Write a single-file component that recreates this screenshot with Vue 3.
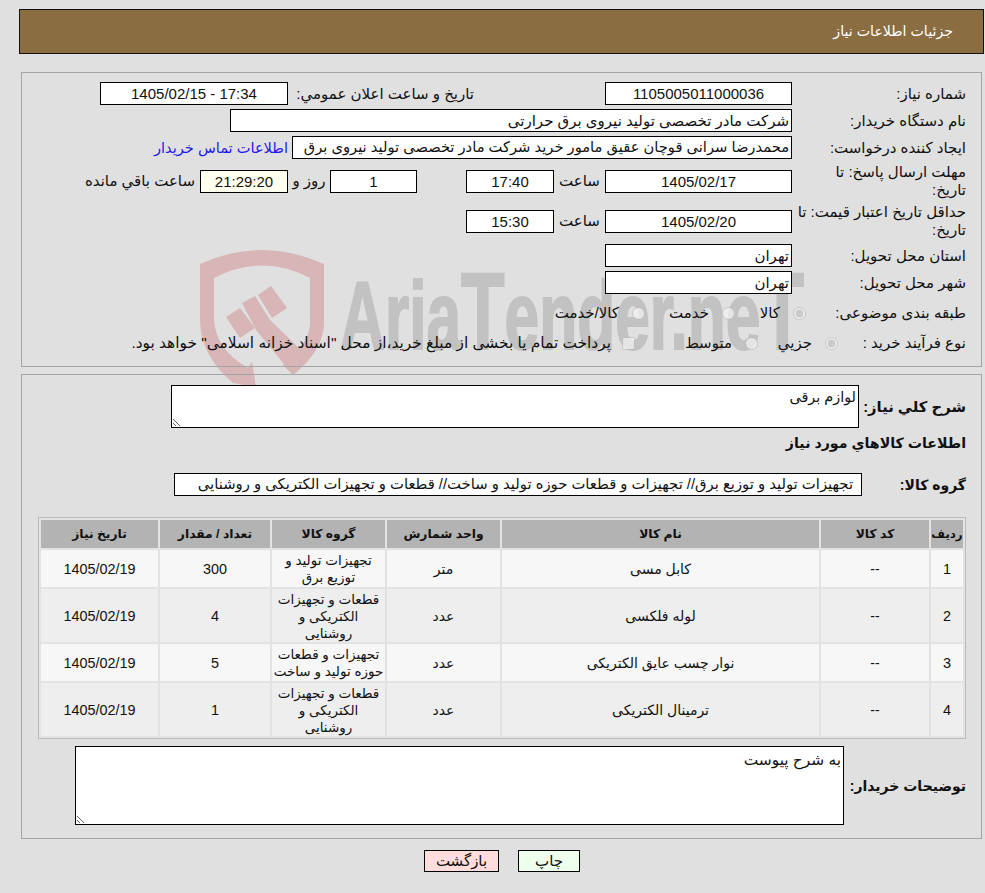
<script setup>
const rows = [
  { id: 1, name: 'کابل مسی', group: 'تجهیزات تولید و\nتوزیع برق', amount: '300', unit: 'متر', tall: false },
  { id: 2, name: 'لوله فلکسی', group: 'قطعات و تجهیزات\nالکتریکی و\nروشنایی', amount: '4', unit: 'عدد', tall: true },
  { id: 3, name: 'نوار چسب عایق الکتریکی', group: 'تجهیزات و قطعات\nحوزه تولید و ساخت', amount: '5', unit: 'عدد', tall: false },
  { id: 4, name: 'ترمینال الکتریکی', group: 'قطعات و تجهیزات\nالکتریکی و\nروشنایی', amount: '1', unit: 'عدد', tall: true }
]
</script>

<template>
  <div class="page" dir="rtl">
    <div class="title-bar">جزئیات اطلاعات نیاز</div>

    <div class="content">
      <svg class="watermark" width="660" height="200" viewBox="0 0 660 200">
        <path d="M10 24 Q72 -4 134 24 L134 85 Q132 112 103 135 L93 125 Q118 105 120 85 L120 38 Q72 13 24 38 L24 80 Q26 110 58 128 L62 122 L66 147 L43 143 Q10 115 10 80 Z" fill="#d8b5b6" />
        <path d="M36 77 L50 68 L65 88 L50 98 Z" fill="#d8b5b6" />
        <path d="M52 63 L65 56 L80 80 L116 115 L103 135 L66 90 Z" fill="#d8b5b6" />
        <path d="M68 55 L81 46 L97 68 L82 78 Z" fill="#d8b5b6" />
        <text class="wm-text" x="150" y="109" textLength="464" lengthAdjust="spacingAndGlyphs">Aria<tspan class="wm-cap">T</tspan>ender.ne<tspan class="wm-cap">T</tspan></text>
      </svg>

      <section class="panel panel-top">
        <div class="row">
          <label class="label">شماره نیاز:</label>
          <div class="field w-187 center">1105005011000036</div>
          <span class="label-inline announce">تاریخ و ساعت اعلان عمومي:</span>
          <div class="field w-188 center" dir="ltr">1405/02/15 - 17:34</div>
        </div>
        <div class="row">
          <label class="label">نام دستگاه خریدار:</label>
          <div class="field w-562">شرکت مادر تخصصی تولید نیروی برق حرارتی</div>
        </div>
        <div class="row">
          <label class="label">ایجاد کننده درخواست:</label>
          <div class="field w-500 requester">محمدرضا سرانی قوچان عقیق مامور خرید شرکت مادر تخصصی تولید نیروی برق</div>
          <a class="link">اطلاعات تماس خریدار</a>
        </div>
        <div class="row row-two-line">
          <label class="label">مهلت ارسال پاسخ: تا<br>تاریخ:</label>
          <div class="field w-187 center">1405/02/17</div>
          <span class="label-inline hour">ساعت</span>
          <div class="field w-88 center">17:40</div>
          <div class="field w-87 center days">1</div>
          <span class="label-inline day">روز و</span>
          <div class="field w-88 center timer">21:29:20</div>
          <span class="label-inline remain">ساعت باقي مانده</span>
        </div>
        <div class="row row-two-line second">
          <label class="label">حداقل تاریخ اعتبار قیمت: تا<br>تاریخ:</label>
          <div class="field w-187 center">1405/02/20</div>
          <span class="label-inline hour">ساعت</span>
          <div class="field w-88 center">15:30</div>
        </div>
        <div class="row">
          <label class="label">استان محل تحویل:</label>
          <div class="field w-187">تهران</div>
        </div>
        <div class="row">
          <label class="label">شهر محل تحویل:</label>
          <div class="field w-187">تهران</div>
        </div>
        <div class="row options subject">
          <label class="label">طبقه بندی موضوعی:</label>
          <input class="radio" type="radio" disabled checked>
          <span class="opt w-kala">کالا</span>
          <input class="radio" type="radio" disabled>
          <span class="opt w-service">خدمت</span>
          <input class="radio" type="radio" disabled>
          <span class="opt">کالا/خدمت</span>
        </div>
        <div class="row options process">
          <label class="label">نوع فرآیند خرید :</label>
          <input class="radio" type="radio" disabled checked>
          <span class="opt w-small">جزيي</span>
          <input class="radio" type="radio" disabled>
          <span class="opt w-mid">متوسط</span>
          <input class="radio check" type="checkbox" disabled>
          <span class="opt opt-long">پرداخت تمام یا بخشی از مبلغ خرید،از محل "اسناد خزانه اسلامی" خواهد بود.</span>
        </div>
      </section>

      <section class="panel panel-bottom">
        <div class="desc-row">
          <label class="bold-label desc-label">شرح کلي نیاز:</label>
          <textarea class="area area-short" readonly>لوازم برقی</textarea>
        </div>
        <div class="section-title">اطلاعات کالاهاي مورد نیاز</div>
        <div class="group-row">
          <label class="bold-label group-label">گروه کالا:</label>
          <div class="field w-688 group-field">تجهیزات تولید و توزیع برق// تجهیزات و قطعات حوزه تولید و ساخت// قطعات و تجهیزات الکتریکی و روشنایی</div>
        </div>

        <table class="goods">
          <thead>
            <tr>
              <th class="c-id">ردیف</th>
              <th class="c-code">کد کالا</th>
              <th class="c-name">نام کالا</th>
              <th class="c-unit">واحد شمارش</th>
              <th class="c-group">گروه کالا</th>
              <th class="c-amount">تعداد / مقدار</th>
              <th class="c-date">تاریخ نیاز</th>
            </tr>
          </thead>
          <tbody>
            <tr v-for="item in rows" :key="item.id" :class="{ tall: item.tall, odd: item.id % 2 === 0 }">
              <td class="num">{{ item.id }}</td>
              <td>--</td>
              <td>{{ item.name }}</td>
              <td>{{ item.unit }}</td>
              <td class="td-group">{{ item.group }}</td>
              <td class="num">{{ item.amount }}</td>
              <td class="num">1405/02/19</td>
            </tr>
          </tbody>
        </table>

        <div class="notes-row">
          <label class="bold-label notes-label">توضیحات خریدار:</label>
          <textarea class="area area-tall" readonly>به شرح پیوست</textarea>
        </div>
      </section>
    </div>

    <div class="actions">
      <button class="btn btn-print">چاپ</button>
      <button class="btn btn-back">بازگشت</button>
    </div>
  </div>
</template>

<style>
html,
body {
  margin: 0;
  background: #e0e0e0;
}
</style>

<style scoped>
.page {
  width: 985px;
  height: 893px;
  box-sizing: border-box;
  padding-top: 9px;
  overflow: hidden;
  color: #111;
  font-family: "Liberation Sans", "DejaVu Sans", sans-serif;
  font-size: 15px;
}

.title-bar {
  height: 43px;
  line-height: 43px;
  margin: 0 1px 0 19px;
  padding-right: 30px;
  background: #8b6d42;
  border: 1px solid #111;
  color: #fff;
  font-size: 14.2px;
}

.content {
  position: relative;
  margin-top: 18px;
}

.watermark {
  position: absolute;
  top: 168px;
  left: 190px;
  direction: ltr;
}

.wm-text {
  font-family: "Liberation Sans", sans-serif;
  font-size: 96px;
  font-weight: 700;
  fill: #c2c2c2;
  stroke: #c2c2c2;
  stroke-width: 2px;
}

.wm-cap {
  font-size: 110px;
}

.panel {
  position: relative;
  margin: 0 3px 0 21px;
  border: 1px solid #a5a5a5;
  box-sizing: border-box;
}

.panel-top {
  height: 295px;
  padding: 9px 15px 0 0;
}

.panel-bottom {
  height: 465px;
  margin-top: 7px;
  padding: 10px 15px 0 16px;
}

.row {
  display: flex;
  align-items: center;
  height: 23px;
  margin-bottom: 4px;
}

.row-two-line {
  height: 36px;
}

.row-two-line.second {
  margin-bottom: 5px;
}

.label {
  flex: 0 0 174px;
  box-sizing: border-box;
  line-height: 18px;
}

.field {
  box-sizing: border-box;
  height: 23px;
  line-height: 21px;
  padding: 0 2px;
  background: #fff;
  border: 1px solid #000;
  white-space: nowrap;
  overflow: hidden;
}

.requester {
  font-size: 14.7px;
}

.center {
  text-align: center;
}

.w-187 { width: 187px; }
.w-188 { width: 188px; }
.w-562 { width: 562px; }
.w-500 { width: 500px; }
.w-88 { width: 88px; }
.w-87 { width: 87px; }
.w-688 { width: 688px; }

.announce {
  margin: 0 131px 0 5px;
  width: 181px;
  white-space: nowrap;
}

.link {
  margin-right: 4px;
  color: #1a1aee;
  font-size: 14.6px;
  white-space: nowrap;
}

.hour {
  width: 51px;
  text-align: center;
  white-space: nowrap;
}

.days {
  margin-right: 49px;
}

.day {
  width: 42px;
  text-align: center;
  white-space: nowrap;
}

.timer {
  background: #fffff0;
}

.remain {
  margin-right: 5px;
  white-space: nowrap;
}

.options {
  height: 20px;
}

.subject {
  margin-top: 9px;
  margin-bottom: 10px;
}

.subject .label {
  flex-basis: 160px;
}

.process .label {
  flex-basis: 128px;
}

.radio {
  width: 13px;
  height: 13px;
  margin: 0 0 0 13px;
  flex: none;
}

.check {
  margin-left: 11px;
}

.opt {
  white-space: nowrap;
}

.opt-long {
  font-size: 15.4px;
}

.w-kala { width: 19px; margin-left: 26px; }
.w-service { width: 39px; margin-left: 25px; }
.w-small { width: 34px; margin-left: 20px; }
.w-mid { width: 45px; margin-left: 52px; }

.desc-row,
.notes-row {
  display: flex;
  align-items: center;
}

.bold-label {
  flex: none;
  font-size: 14px;
  font-weight: 700;
  white-space: nowrap;
}

.desc-label {
  width: 107px;
  font-size: 14.8px;
}

.notes-label {
  width: 122px;
}

.area {
  box-sizing: border-box;
  display: block;
  padding: 3px 2px 2px;
  margin: 0;
  background: #fff;
  border: 1px solid #000;
  border-radius: 0;
  outline: none;
  font: inherit;
  font-size: 14.4px;
  color: #111;
}

.area-short {
  width: 688px;
  height: 43px;
}

.area-tall {
  width: 769px;
  height: 79px;
  padding-top: 4px;
  font-size: 15.4px;
}

.section-title {
  height: 24px;
  line-height: 24px;
  margin-top: 3px;
  font-size: 14.2px;
  font-weight: 700;
}

.group-row {
  display: flex;
  align-items: center;
  margin-top: 18px;
}

.group-label {
  width: 104px;
}

.group-field {
  padding-right: 8px;
  font-size: 14.8px;
}

.goods {
  width: 928px;
  height: 222px;
  margin-top: 21px;
  box-sizing: border-box;
  border: 1px solid #bbb;
  border-spacing: 2px;
  border-collapse: separate;
  background: #e3e3e3;
  table-layout: fixed;
  text-align: center;
  font-size: 14px;
}

.goods th {
  height: 28px;
  padding: 0;
  background: #b3b3b3;
  font-size: 12.3px;
  font-weight: 700;
  white-space: nowrap;
}

.goods th.c-id {
  font-size: 11.8px;
}

.goods td {
  height: 36px;
  padding: 1px 0 0;
  background: #f7f7f7;
  line-height: 17px;
}

.goods td.num {
  font-size: 14.4px;
}

.goods td.td-group {
  font-size: 13.5px;
  white-space: pre-line;
}

.goods tr.tall td {
  height: 52px;
}

.goods tr.odd td {
  background: #eee;
}

.c-id { width: 32px; }
.c-code { width: 108px; }
.c-name { width: 317px; }
.c-unit { width: 113px; }
.c-group { width: 113px; }
.c-amount { width: 110px; }
.c-date { width: 117px; }

.notes-row {
  margin-top: 7px;
}

.actions {
  display: flex;
  justify-content: center;
  gap: 19px;
  margin-top: 11px;
  padding-left: 19px;
}

.btn {
  box-sizing: border-box;
  height: 22px;
  padding: 0;
  border: 1px solid #000;
  border-radius: 0;
  font: inherit;
  color: #111;
}

.btn-print {
  width: 62px;
  background: #eeffee;
}

.btn-back {
  width: 75px;
  background: #ffdddd;
}
</style>
